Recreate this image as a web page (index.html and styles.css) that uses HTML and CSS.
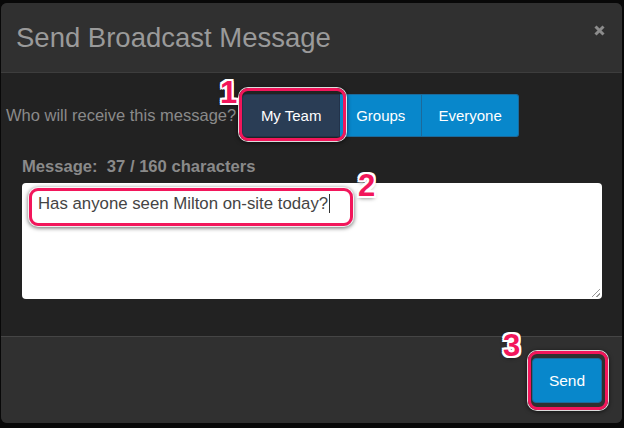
FILE: index.html
```html
<!DOCTYPE html>
<html>
<head lang="en">
    <meta charset="UTF-8">
    <title>Send Broadcast Message</title>
    <link rel="stylesheet" href="styles.css">
</head>
<body>
<div class="modal">
    <div class="modal-header">
        <h3 class="modal-title">Send Broadcast Message</h3>
        <span class="close">
            <svg width="11" height="11" viewBox="0 0 11 11"><path d="M1.5 1.5 L9.5 9.5 M9.5 1.5 L1.5 9.5" stroke="#8c8c8c" stroke-width="3" stroke-linecap="butt"/></svg>
        </span>
    </div>
    <div class="modal-body">
        <div class="recipients">
            <span class="recipients-label">Who will receive this message?</span>
            <div class="btn-group">
                <span class="btn active">My Team</span>
                <span class="btn">Groups</span>
                <span class="btn">Everyone</span>
            </div>
        </div>
        <div class="msg-label">Message:&nbsp; 37 / 160 characters</div>
        <div class="msg-box">Has anyone seen Milton on-site today?<span class="caret"></span></div>
    </div>
    <div class="modal-footer">
        <span class="btn btn-send">Send</span>
    </div>

    <!-- callouts -->
    <div class="mark mark-1"></div>
    <div class="step step-1">1</div>
    <div class="mark mark-2"></div>
    <div class="step step-2">2</div>
    <div class="mark mark-3"></div>
    <div class="step step-3">3</div>
</div>
</body>
</html>
```

FILE: styles.css
```css
* {
    margin: 0;
    padding: 0;
    box-sizing: border-box;
}
body {
    background: #080808;
    font-family: "Liberation Sans", Arial, sans-serif;
}
.modal {
    position: relative;
    width: 621px;
    height: 420px;
    margin: 3px 0 0 1px;
    border-radius: 6px;
    overflow: hidden;
    background: #222;
    display: flex;
    flex-direction: column;
}
.modal-header {
    height: 70px;
    display: flex;
    justify-content: space-between;
    align-items: flex-start;
    padding: 0 17px 0 15px;
    background: #303030;
    border-bottom: 1px solid #3d3d3d;
}
.modal-title {
    font-size: 27.5px;
    font-weight: normal;
    line-height: 69px;
    color: #9a9a9a;
}
.close {
    display: block;
    margin-top: 22px;
    height: 11px;
}
.close svg {
    display: block;
}
.modal-body {
    flex: 1;
    padding-top: 21px;
}
.recipients {
    display: flex;
    align-items: center;
    padding-left: 5px;
}
.recipients-label {
    font-size: 16.5px;
    color: #8a8a8a;
    margin-right: 6px;
}
.btn-group {
    display: flex;
}
.btn {
    display: flex;
    align-items: center;
    justify-content: center;
    height: 43px;
    padding: 0 16px;
    font-size: 15px;
    color: #fff;
    background: #0887cb;
    border: 1px solid #1c6a9b;
}
.btn-group .btn + .btn {
    border-left: 0;
}
.btn-group .btn:first-child {
    border-radius: 4px 0 0 4px;
}
.btn-group .btn:last-child {
    border-radius: 0 3px 3px 0;
}
.btn.active {
    background: #2a3d55;
    border-color: #22324a;
    width: 98px;
}
.msg-label {
    margin: 20px 0 0 21px;
    font-size: 16.6px;
    line-height: 20px;
    font-weight: bold;
    color: #8a8a8a;
}
.msg-box {
    position: relative;
    margin: 6px 20px 0 21px;
    height: 116px;
    padding: 10px 16px;
    background: #fff;
    border-radius: 4px;
    font-size: 16.8px;
    line-height: 22px;
    color: #444;
}
.msg-box::after {
    content: "";
    position: absolute;
    right: 2px;
    bottom: 2px;
    width: 8px;
    height: 8px;
    background: linear-gradient(135deg, transparent 45%, #999 45%, #999 55%, transparent 55%, transparent 72%, #999 72%, #999 82%, transparent 82%);
}
.caret {
    display: inline-block;
    width: 1px;
    height: 19px;
    margin-left: 1px;
    vertical-align: -4px;
    background: #333;
}
.modal-footer {
    height: 87px;
    display: flex;
    justify-content: flex-end;
    align-items: flex-start;
    padding: 21px 20px 0 0;
    background: #303030;
    border-top: 1px solid #454545;
}
.btn-send {
    width: 70px;
    height: 45px;
    border-radius: 4px;
    font-size: 15.5px;
}

/* callouts */
.mark {
    position: absolute;
    border: 3px solid #f2165b;
    border-radius: 9px;
    box-shadow: 0 0 0 1px rgba(255, 255, 255, 0.85), 0 1px 4px 1px rgba(0, 0, 0, 0.6);
}
.mark-1 {
    left: 238px;
    top: 85px;
    width: 107px;
    height: 53px;
}
.mark-2 {
    left: 28px;
    top: 185px;
    width: 324px;
    height: 38px;
}
.mark-3 {
    left: 527px;
    top: 348px;
    width: 80px;
    height: 59px;
}
.step {
    position: absolute;
    font-size: 31px;
    line-height: 24px;
    font-weight: bold;
    color: #f2165b;
    text-shadow: 2px 0 0 #fff, -2px 0 0 #fff, 0 2px 0 #fff, 0 -2px 0 #fff,
        2px 2px 0 #fff, -2px 2px 0 #fff, 2px -2px 0 #fff, -2px -2px 0 #fff,
        0 2px 4px rgba(0, 0, 0, 0.6);
}
.step-1 {
    left: 219px;
    top: 78px;
}
.step-2 {
    left: 357px;
    top: 171px;
}
.step-3 {
    left: 502px;
    top: 331px;
}
```
